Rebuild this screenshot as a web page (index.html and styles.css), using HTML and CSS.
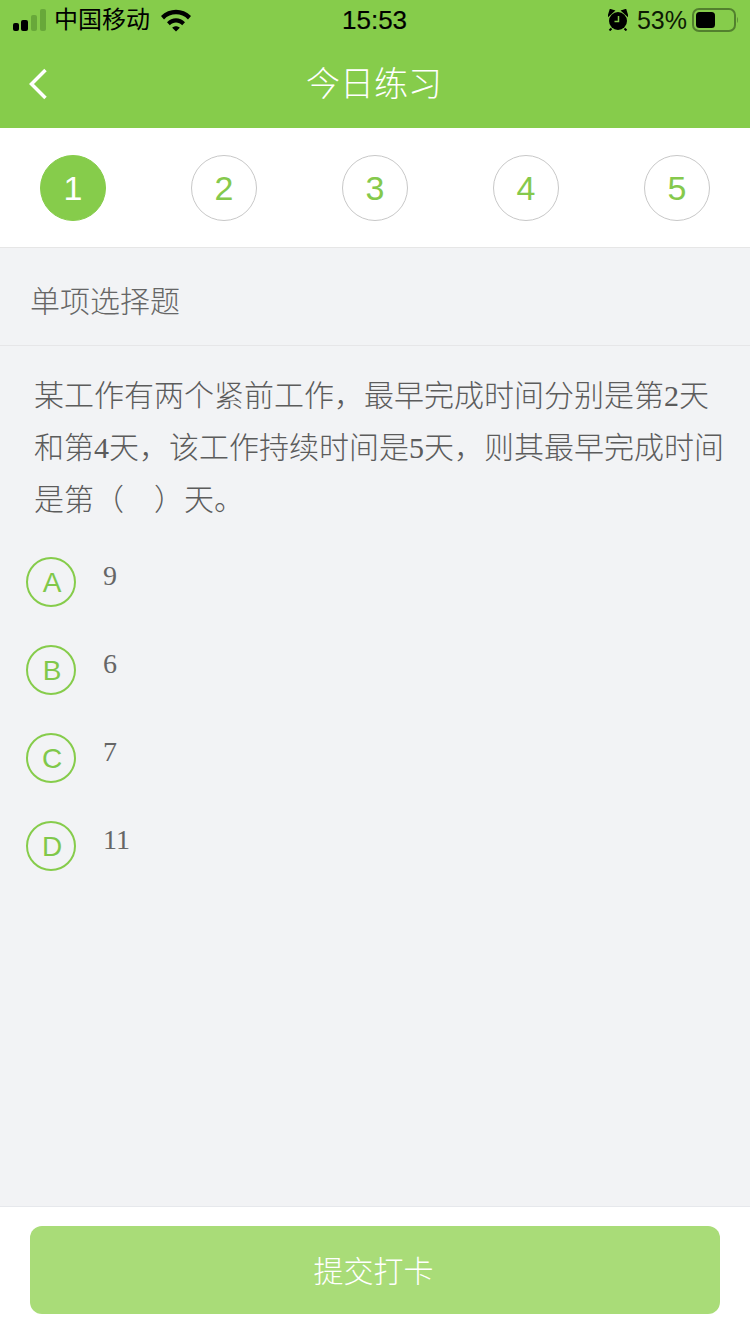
FILE: index.html
```html
<!DOCTYPE html>
<html lang="zh">
<head>
<meta charset="utf-8">
<title>今日练习</title>
<link rel="stylesheet" href="styles.css">
</head>
<body>
<div class="page">
  <header class="top">
    <div class="status">
      <div class="status-left">
        <svg class="signal" width="34" height="22" viewBox="0 0 34 22"><rect x="0" y="14" width="6" height="8" rx="2" fill="#000"/><rect x="8" y="11" width="7" height="11" rx="2" fill="#000"/><rect x="18" y="6" width="6" height="16" rx="2" fill="#68a83a"/><rect x="27" y="0" width="6" height="22" rx="2" fill="#68a83a"/></svg>
        <span class="carrier">中国移动</span>
        <svg class="wifi" width="30" height="23" viewBox="0 0 30 23"><path d="M0 7C8.300-1.500 21.700-1.500 30 7L27 10.400C20.500 3.600 9.500 3.600 3 10.400zM6 13.200C11 8 19 8 24 13.200L21.200 16.300C17.600 12.700 12.400 12.700 8.800 16.300zM11.200 18.800C13.400 16.800 16.600 16.800 18.800 18.800L15 22.500z" fill="#000"/></svg>
      </div>
      <span class="time">15:53</span>
      <div class="status-right">
        <svg class="alarm" width="20" height="22" viewBox="0 0 20 22"><circle cx="10" cy="12" r="9" fill="#000"/><path d="M1 6 5.500 2 2.500 1zM19 6 14.500 2 17.500 1z" fill="#000" stroke="#000" stroke-width="2"/><path d="M3.500 19.500 1.500 21.500M16.500 19.500 18.500 21.500" stroke="#000" stroke-width="2"/><path d="M10.500 7v5.500H6.500" fill="none" stroke="#86cc4b" stroke-width="1.500"/></svg>
        <span class="percent">53%</span>
        <svg class="battery" width="46" height="24" viewBox="0 0 46 24"><rect x="1" y="1" width="42" height="22" rx="6" fill="none" stroke="#52802e" stroke-width="2"/><rect x="4" y="4" width="19" height="16" rx="3.500" fill="#000"/><path d="M45 9c1 .6 1 5.400 0 6z" fill="#52802e"/></svg>
      </div>
    </div>
    <nav class="nav">
      <svg class="back" width="22" height="34" viewBox="0 0 22 34"><path d="M17.500 3 3.500 17l14 14" fill="none" stroke="#fff" stroke-width="3.500"/></svg>
      <h1 class="title">今日练习</h1>
    </nav>
  </header>

  <div class="steps">
    <div class="step step-active">1</div>
    <div class="step">2</div>
    <div class="step">3</div>
    <div class="step">4</div>
    <div class="step">5</div>
  </div>

  <div class="kind">单项选择题</div>

  <main class="body">
    <p class="question">某工作有两个紧前工作，最早完成时间分别是第2天和第4天，该工作持续时间是5天，则其最早完成时间是第（&nbsp;&nbsp;&nbsp;&nbsp;）天。</p>
    <ul class="options">
      <li class="option"><span class="letter">A</span><span class="answer">9</span></li>
      <li class="option"><span class="letter">B</span><span class="answer">6</span></li>
      <li class="option"><span class="letter">C</span><span class="answer">7</span></li>
      <li class="option"><span class="letter">D</span><span class="answer">11</span></li>
    </ul>
  </main>

  <footer class="footer">
    <button class="submit" type="button">提交打卡</button>
  </footer>
</div>
</body>
</html>
```

FILE: styles.css
```css
* { box-sizing: border-box; }
html, body { margin: 0; padding: 0; }
body { background: #f2f3f5; font-family: "Liberation Sans", "Noto Sans CJK SC", sans-serif; }
.page { width: 750px; height: 1334px; display: flex; flex-direction: column; overflow: hidden; }

.top { background: #86cc4b; height: 128px; flex: none; }
.status { height: 40px; padding: 0 13px; display: flex; align-items: center; justify-content: space-between; position: relative; color: #000; }
.status-left { display: flex; align-items: center; }
.signal { margin-top: -1px; }
.carrier { font-size: 24px; margin-left: 7px; line-height: 40px; font-weight: 400; }
.wifi { margin-left: 11px; }
.time { font-size: 26px; font-weight: 500; -webkit-text-stroke: .2px #000; position: absolute; left: 342px; line-height: 40px; }
.status-right { display: flex; align-items: center; }
.alarm { margin-right: 9px; }
.percent { font-size: 25px; line-height: 40px; margin-right: 5px; color: #0c1a04; }
.battery { margin-right: -1px; }

.nav { height: 88px; display: flex; align-items: center; justify-content: center; position: relative; }
.back { position: absolute; left: 28px; top: 27px; }
.title { margin: 0 2px 0 0; font-size: 34px; font-weight: 300; color: #fff; line-height: 88px; }

.steps { height: 120px; flex: none; background: #fff; border-bottom: 1px solid #e6e6e6; padding: 27px 40px 0; display: flex; justify-content: space-between; align-items: flex-start; }
.step { width: 66px; height: 66px; border: 1px solid #c8c8c8; border-radius: 50%; display: flex; align-items: center; justify-content: center; font-size: 34px; color: #85c94c; }
.step-active { background: #86cc4b; border-color: #86cc4b; color: #fff; }

.kind { height: 98px; flex: none; border-bottom: 1px solid #e6e6e8; padding: 0 30px; font-size: 30px; font-weight: 300; line-height: 108px; color: #666; }

.body { flex: 1; min-height: 0; }
.question { margin: 0; padding: 24px 24px 0 34px; font-family: "Liberation Serif", "Noto Sans CJK SC", serif; font-size: 30px; font-weight: 300; line-height: 52px; color: #5c5c5c; }
.options { list-style: none; margin: 0; padding: 31px 0 0 26px; display: flex; flex-direction: column; gap: 38px; }
.option { height: 50px; display: flex; align-items: flex-start; }
.letter { width: 50px; height: 50px; flex: none; border: 2px solid #86cc4b; border-radius: 50%; display: flex; align-items: center; justify-content: center; padding: 2px 0 0 2px; font-size: 28px; color: #80c84a; }
.answer { margin-left: 27px; font-family: "Liberation Serif", serif; font-size: 28px; line-height: 38px; color: #666; }

.footer { height: 128px; flex: none; background: #fff; border-top: 1px solid #e6e8ec; padding: 19px 30px 0; }
.submit { display: block; width: 690px; height: 88px; border: 0; border-radius: 12px; background: #a9dc78; color: #fff; font-family: "Liberation Sans", "Noto Sans CJK SC", sans-serif; font-size: 30px; font-weight: 300; padding: 0 3px 3px 0; }
```
